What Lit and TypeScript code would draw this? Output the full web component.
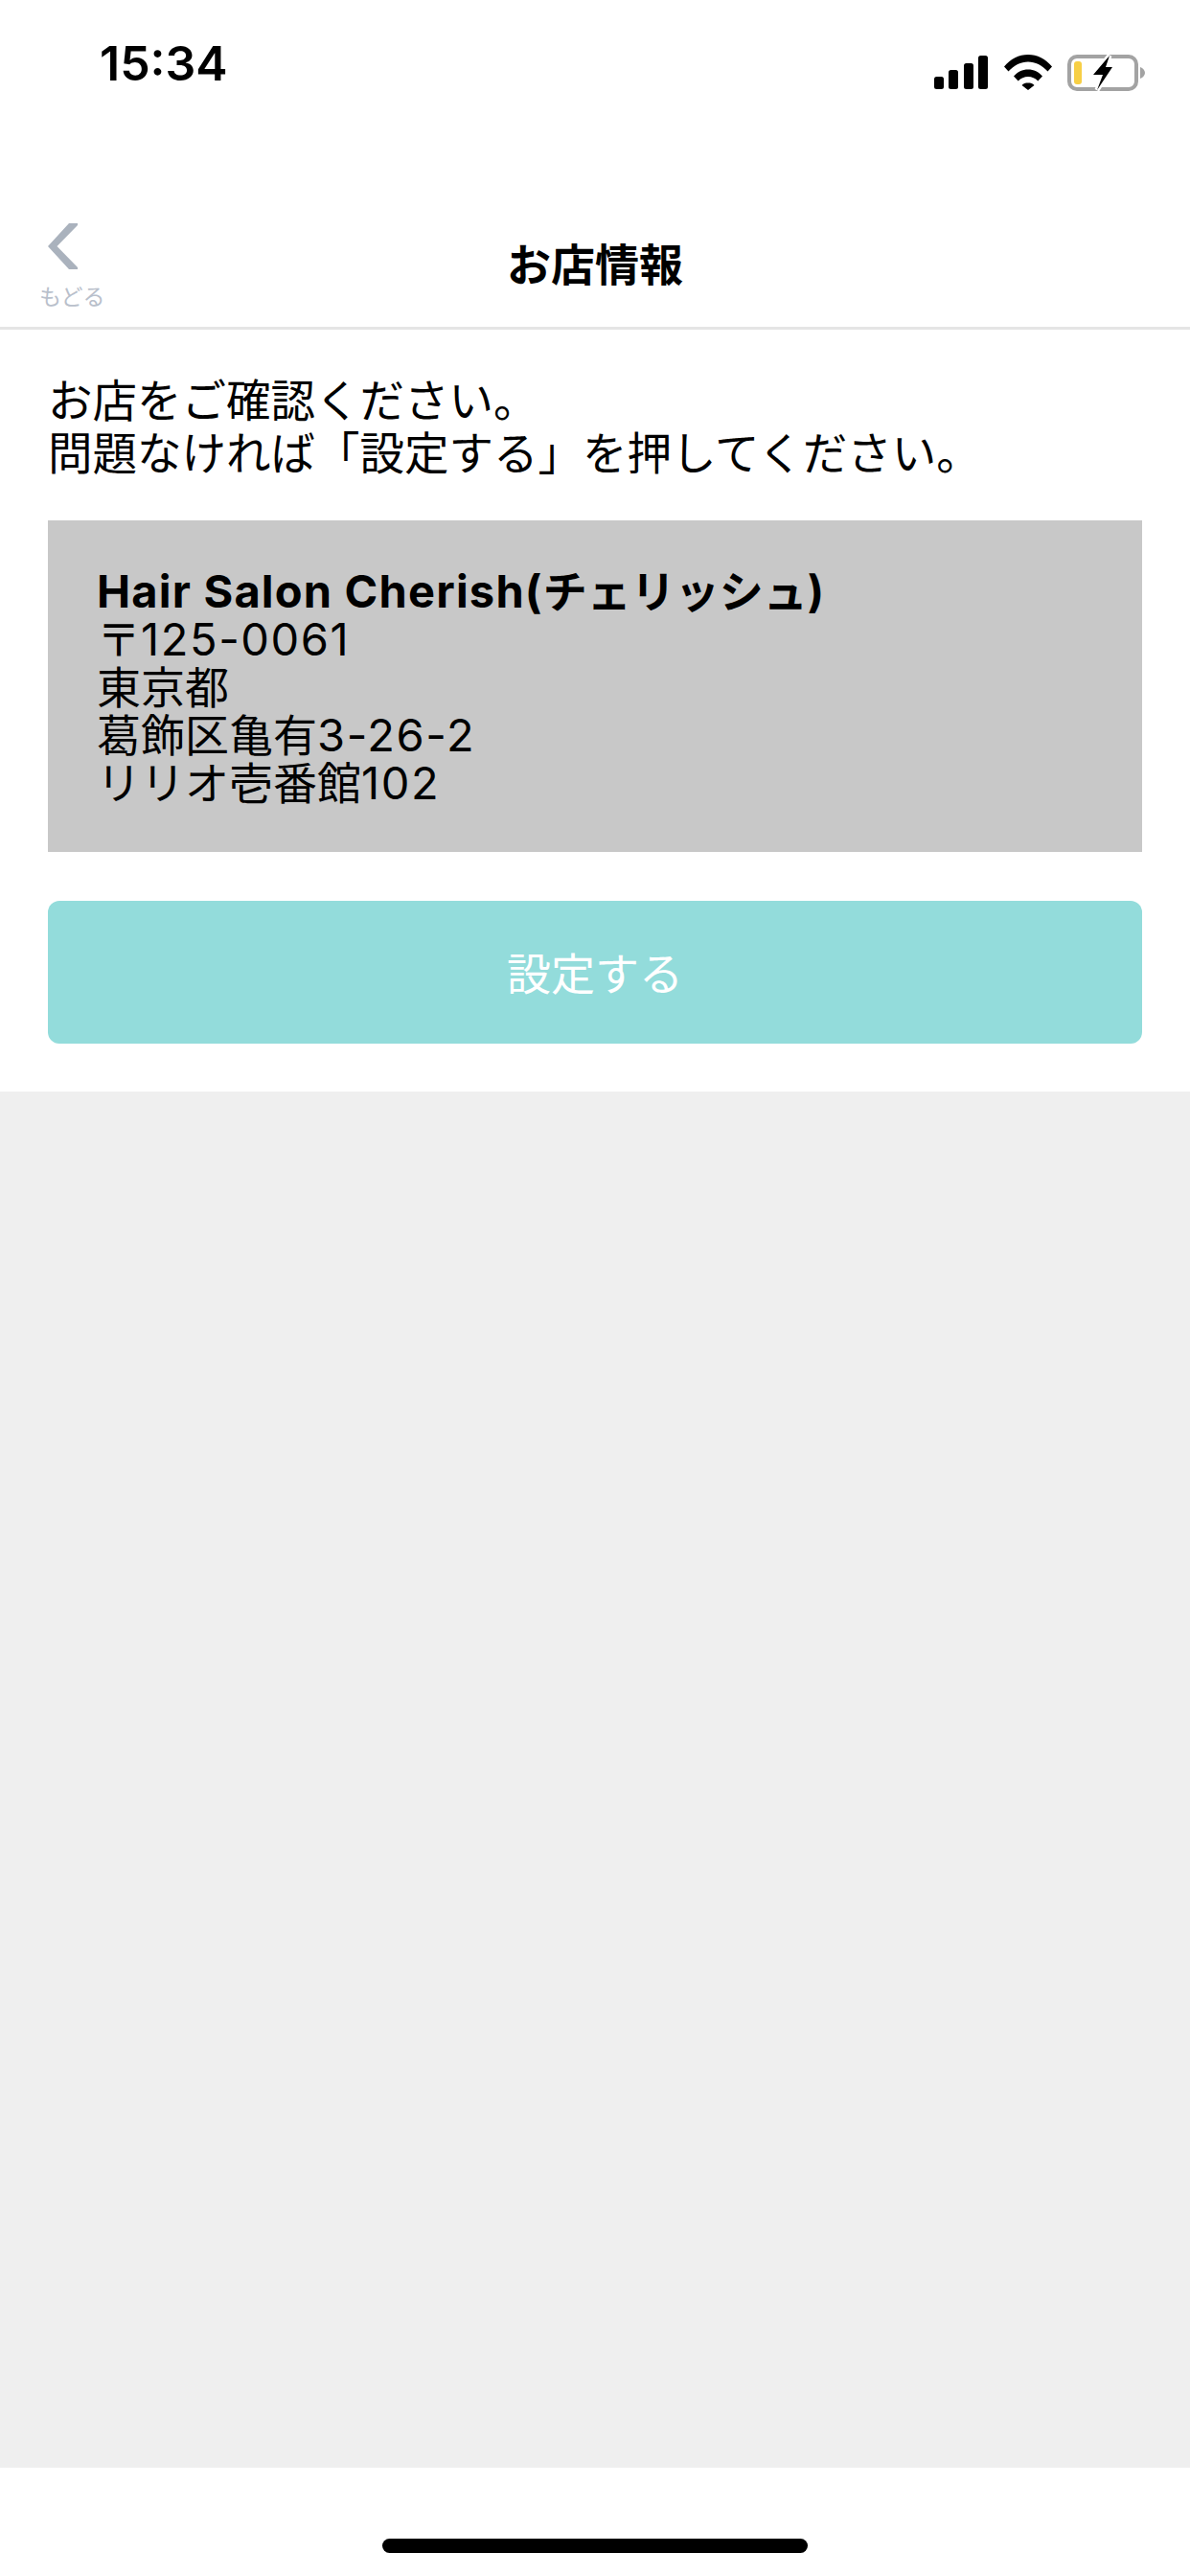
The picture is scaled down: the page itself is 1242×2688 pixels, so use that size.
import { LitElement, html, css } from 'lit';
import { customElement } from 'lit/decorators.js';

@customElement('app-root')
export class AppRoot extends LitElement {
  static styles = css`
    :host {
      display: block;
      width: 1242px;
      height: 2688px;
      background: #fff;
      color: #000;
      font-family: "Inter", "Noto Sans CJK JP", sans-serif;
    }

    .page {
      display: flex;
      flex-direction: column;
      height: 100%;
    }

    .status {
      display: flex;
      justify-content: space-between;
      height: 120px;
      padding: 36px 46px 0 104px;
      box-sizing: border-box;
    }

    .time {
      font-size: 50px;
      font-weight: 600;
      line-height: 60px;
    }

    .status-icons {
      display: flex;
      gap: 17px;
      padding-top: 21px;
      align-items: flex-start;
    }

    .battery {
      margin-left: -1px;
    }

    .nav {
      display: grid;
      grid-template-columns: 200px 1fr 200px;
      height: 224px;
      box-sizing: border-box;
      border-bottom: 3px solid #e5e5e5;
    }

    .back {
      display: flex;
      flex-direction: column;
      align-items: flex-start;
      padding: 113px 0 0 41px;
    }

    .back svg {
      margin-left: 9px;
    }

    .back span {
      font-size: 23px;
      line-height: 26px;
      margin-top: 16px;
      color: #b9c0cb;
      white-space: nowrap;
    }

    .title {
      text-align: center;
      font-size: 46px;
      font-weight: 700;
      line-height: 60px;
      padding-top: 126px;
    }

    .content {
      display: flex;
      flex-direction: column;
      padding: 47px 50px 50px;
    }

    .intro {
      font-size: 46.5px;
      line-height: 55px;
      margin: 0 0 42px;
      white-space: nowrap;
    }

    .shop {
      height: 346px;
      box-sizing: border-box;
      padding: 49px 51px;
      background: #c8c8c8;
      font-size: 46px;
      line-height: 50px;
    }

    .shop b {
      display: block;
      font-weight: 700;
    }

    .latin {
      font-size: 47px;
      letter-spacing: 1.6px;
    }

    .shop b .latin {
      font-size: 47px;
      letter-spacing: 1.2px;
    }

    .submit {
      display: flex;
      align-items: center;
      justify-content: center;
      height: 149px;
      margin-top: 51px;
      padding-bottom: 3px;
      box-sizing: border-box;
      border-radius: 12px;
      background: #93dcdb;
      color: #fff;
      font-size: 46px;
    }

    .rest {
      flex: 1;
      background: #efefef;
    }

    .home {
      display: flex;
      justify-content: center;
      height: 113px;
      padding-top: 74px;
      box-sizing: border-box;
    }

    .home i {
      display: block;
      width: 444px;
      height: 15px;
      border-radius: 8px;
      background: #000;
    }
  `;

  render() {
    return html`
      <div class="page">
        <div class="status">
          <div class="time">15:34</div>
          <div class="status-icons">
            <svg width="56" height="36" viewBox="0 0 56 36">
              <rect x="0" y="23" width="10" height="13" rx="2.5" />
              <rect x="15" y="16" width="10" height="20" rx="2.5" />
              <rect x="31" y="9" width="10" height="27" rx="2.5" />
              <rect x="46" y="1" width="10" height="35" rx="2.5" />
            </svg>
            <svg width="50" height="37" viewBox="0 0 50 37">
              <path d="M0 12.5C6.500 4.500 15.500 0 25 0s18.500 4.500 25 12.500l-4.500 5C39.500 11 32.500 7.500 25 7.500S10.500 11 4.500 17.500z" />
              <path d="M10 22.500C14 18 19 15.500 25 15.500s11 2.500 15 7l-4.700 5C32.500 24.500 29 23 25 23s-7.500 1.500-10.300 4.500z" />
              <path d="M18.500 32C20 30 22.500 29.500 25 29.500s5 .5 6.500 2.500L25 37z" />
            </svg>
            <svg class="battery" width="82" height="38" viewBox="0 0 82 38">
              <rect x="2" y="2" width="70" height="34" rx="8" fill="none" stroke="#a3a3a3" stroke-width="4" />
              <path d="M76 13c3 1 5 3.500 5 6s-2 5-5 6z" fill="#a3a3a3" />
              <rect x="7" y="7" width="8" height="24" rx="3" fill="#f7cf45" />
              <path d="M44 1 27 21h10l-6 16 16-24h-7z" stroke="#fff" stroke-width="5" fill="#fff" />
              <path d="M44 1 27 21h10l-6 16 16-24h-7z" />
            </svg>
          </div>
        </div>

        <div class="nav">
          <div class="back">
            <svg width="31" height="48" viewBox="0 0 31 48">
              <path d="M22 0h9v2L9.500 24 31 46v2h-9L0 24z" fill="#aab2bd" />
            </svg>
            <span>もどる</span>
          </div>
          <div class="title">お店情報</div>
          <div></div>
        </div>

        <div class="content">
          <p class="intro">お店をご確認ください。<br />問題なければ「設定する」を押してください。</p>
          <div class="shop">
            <b><span class="latin">Hair Salon Cherish(</span>チェリッシュ)</b>
            〒<span class="latin">125-0061</span><br />
            東京都<br />
            葛飾区亀有<span class="latin">3-26-2</span><br />
            リリオ壱番館<span class="latin">102</span>
          </div>
          <div class="submit">設定する</div>
        </div>

        <div class="rest"></div>
        <div class="home"><i></i></div>
      </div>
    `;
  }
}
